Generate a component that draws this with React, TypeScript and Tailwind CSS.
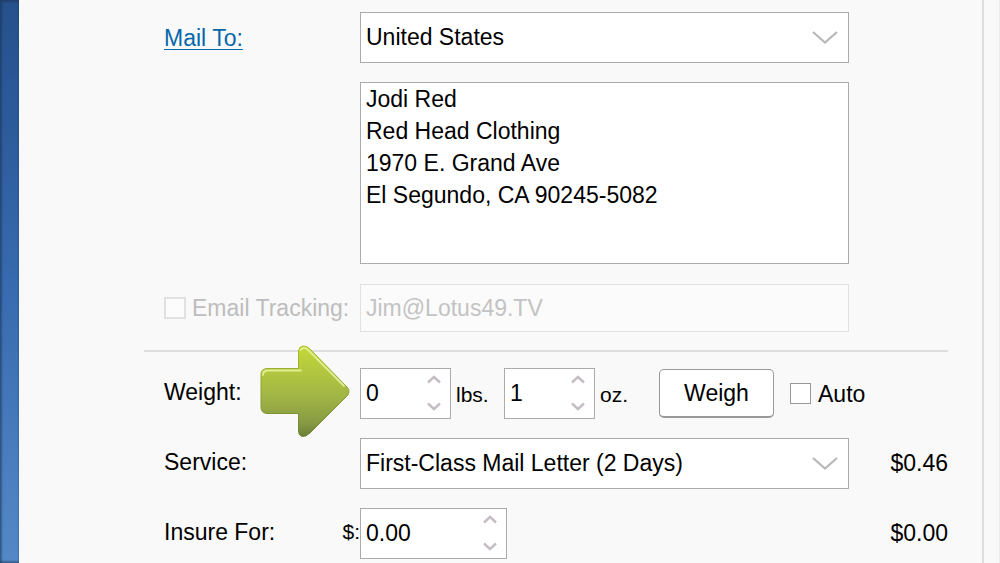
import type { ReactNode } from 'react';

const box = 'border border-[#ababab] bg-white text-black outline-none rounded-none';

function Row({ label, children, price }: { label: ReactNode; children: ReactNode; price?: string }) {
  return (
    <div className="flex pl-5">
      <div className="relative flex w-[196px] shrink-0">{label}</div>
      <div className="min-w-0 flex-1">{children}</div>
      <div className="flex w-[99px] shrink-0 items-center justify-end pb-px">{price}</div>
    </div>
  );
}

function Chevron({ small, up }: { small?: boolean; up?: boolean }) {
  if (small) {
    return (
      <svg viewBox="0 0 14 9" className="h-[9px] w-[14px]" fill="none" stroke="#c4bdc4" strokeWidth="2.4">
        <path d={up ? 'M1 7.5 7 2l6 5.5' : 'M1 1.5 7 7l6-5.5'} />
      </svg>
    );
  }
  return (
    <svg viewBox="0 0 26 13" className="pointer-events-none absolute top-[19px] right-[11px] h-[13px] w-[26px]" fill="none" stroke="#b8b8b8" strokeWidth="2.2">
      <path d="M1 1 13 11.5 25 1" />
    </svg>
  );
}

function Dropdown({ id, value, label }: { id: string; value: string; label?: string }) {
  return (
    <div className="relative">
      <select id={id} aria-label={label} className={`${box} block h-[51px] w-full appearance-none pr-12 pb-px pl-[5px]`}>
        <option>{value}</option>
      </select>
      <Chevron />
    </div>
  );
}

function Stepper({ id, value, wide }: { id: string; value: string; wide?: boolean }) {
  return (
    <div className={`${box} flex h-[51px] ${wide ? 'w-[147px]' : 'w-[91px]'}`}>
      <input id={id} defaultValue={value} className="min-w-0 flex-1 bg-transparent pb-px pl-[5px] outline-none" />
      <div className="flex flex-col items-center justify-between pt-[6px] pr-[9px] pb-[7px]">
        <button type="button" aria-label="Increase" className="flex"><Chevron small up /></button>
        <button type="button" aria-label="Decrease" className="flex"><Chevron small /></button>
      </div>
    </div>
  );
}

function Arrow() {
  return (
    <svg viewBox="0 0 90 93" className="absolute -top-[23px] left-[96px] h-[93px] w-[90px]" aria-hidden="true">
      <defs>
        <linearGradient id="leaf" x1="0" y1="0" x2="0" y2="1">
          <stop offset="0" stopColor="#c3d938" />
          <stop offset=".55" stopColor="#a2b546" />
          <stop offset=".85" stopColor="#879a43" />
          <stop offset="1" stopColor="#6b7f38" />
        </linearGradient>
        <linearGradient id="rim" x1="0" y1="0" x2="0" y2="1">
          <stop offset="0" stopColor="#a9bf27" />
          <stop offset="1" stopColor="#71833c" />
        </linearGradient>
      </defs>
      <path d="M7 23.500H38.500V6Q39 1.500 43 1Q47 .8 50 4L87 42Q91 46.500 87 51L50 88Q46 92 42 91.500Q38.500 90.500 38.500 86V68.500H7Q1 68 1 62V29Q1 24 7 23.500Z" fill="url(#leaf)" stroke="url(#rim)" />
      <path d="M3 30Q3 25.500 8 25.500H41M40.500 5Q42 2.500 45 3Q47 3.500 49 6L84 41" fill="none" stroke="#e8f3a2" strokeWidth="1.800" strokeLinecap="round" opacity=".85" />
    </svg>
  );
}

export default function App() {
  return (
    <div className="flex min-h-screen overflow-hidden bg-[#f9f9f9] font-['Liberation_Sans',Arial,sans-serif] text-[23px] leading-8 text-black">
      <aside className="w-[19px] shrink-0 bg-linear-to-b from-[#25508b] via-[#376aae] to-[#5489c7] shadow-[inset_2px_0_2px_#1d355670,inset_0_2px_2px_#1d355670,inset_0_-2px_2px_#1d355670]" />
      <main className="min-w-0 flex-1 border-r-2 border-[#dedede] pt-3 pr-[34px] pb-1 pl-[125px]">
        <form onSubmit={(e) => e.preventDefault()}>
          <Row label={<a href="#recipient" className="mt-[10px] self-start text-[#0668aa] underline decoration-1 underline-offset-3">Mail To:</a>}>
            <div className="flex flex-col gap-[19px]">
              <Dropdown id="country" label="Country" value="United States" />
              <textarea
                id="recipient"
                aria-label="Recipient address"
                className={`${box} block h-[182px] w-full resize-none px-[5px] leading-8`}
                defaultValue={'Jodi Red\nRed Head Clothing\n1970 E. Grand Ave\nEl Segundo, CA 90245-5082'}
              />
            </div>
          </Row>
          <div className="mt-5">
            <Row
              label={
                <label className="flex items-center whitespace-nowrap text-[#bdbdbd]">
                  <input type="checkbox" disabled className="mr-[6px] size-[22px] appearance-none border-2 border-[#e1e1e1] bg-[#fcfcfc]" />
                  Email Tracking:
                </label>
              }
            >
              <input aria-label="Tracking email" disabled defaultValue="Jim@Lotus49.TV" className="block h-12 w-full border border-[#e1e1e1] bg-[#fbfbfb] px-[5px] text-[#c3c3c3]" />
            </Row>
          </div>
          <hr className="mt-[18px] mb-4 border-t-2 border-[#dedede]" />
          <div className="flex flex-col gap-[19px]">
            <Row label={<><label htmlFor="pounds" className="flex items-center pb-1">Weight:</label><Arrow /></>}>
              <div className="flex items-center whitespace-nowrap *:shrink-0">
                <Stepper id="pounds" value="0" />
                <label htmlFor="pounds" className="w-[53px] pt-[2px] pl-[5px] text-[21px]">lbs.</label>
                <Stepper id="ounces" value="1" />
                <label htmlFor="ounces" className="w-16 pt-[2px] pl-[5px] text-[21px]">oz.</label>
                <button type="button" className="h-[49px] w-[115px] rounded-[5px] border border-b-2 border-[#999] bg-white pb-px">Weigh</button>
                <label className="ml-4 flex items-center">
                  <input type="checkbox" className="mr-[7px] size-[21px] appearance-none border border-[#999] bg-white" />
                  Auto
                </label>
              </div>
            </Row>
            <Row label={<label htmlFor="service" className="flex items-center pb-1">Service:</label>} price="$0.46">
              <Dropdown id="service" value="First-Class Mail Letter (2 Days)" />
            </Row>
            <Row
              label={
                <label htmlFor="insured" className="flex flex-1 items-center justify-between pb-1">
                  Insure For:<span className="text-[21px]">$:</span>
                </label>
              }
              price="$0.00"
            >
              <Stepper id="insured" value="0.00" wide />
            </Row>
          </div>
        </form>
      </main>
      <div className="w-4 shrink-0 border-r border-[#ececec]" />
    </div>
  );
}
